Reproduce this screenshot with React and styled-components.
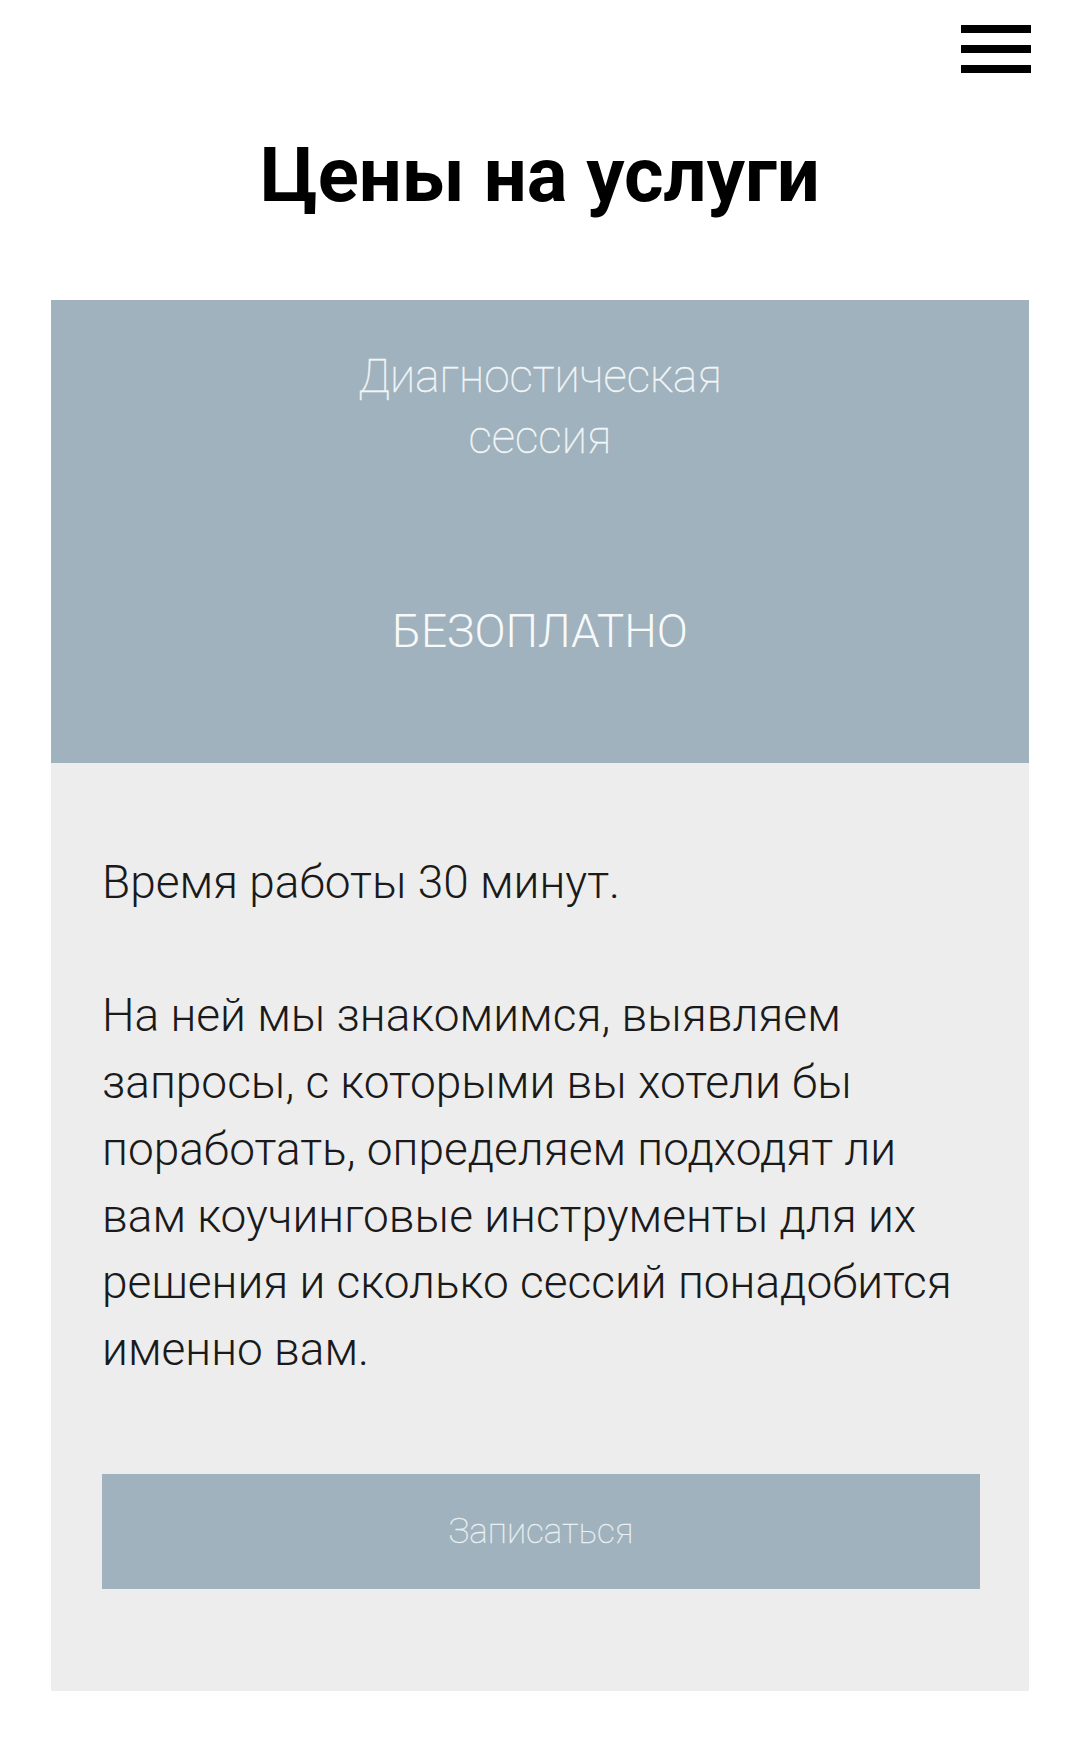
import React from "react";
import styled, { createGlobalStyle } from "styled-components";

const GlobalStyle = createGlobalStyle`
  html, body {
    margin: 0;
    padding: 0;
    background: #ffffff;
  }
  body {
    font-family: Roboto, "Noto Sans", "Liberation Sans", sans-serif;
    color: #000;
  }
  * { box-sizing: border-box; }
`;

const lightStack = `"Roboto Light", Roboto, "Noto Sans", sans-serif`;
const thinStack = `"Roboto Thin", "Roboto Light", Roboto, "Noto Sans", sans-serif`;

const Page = styled.div`
  width: 1080px;
  min-height: 1751px;
  padding: 0 51px;
  display: flex;
  flex-direction: column;
`;

const TopBar = styled.header`
  display: flex;
  justify-content: flex-end;
  padding-top: 25px;
`;

const MenuButton = styled.button`
  width: 70px;
  height: 48px;
  padding: 0;
  margin: 0 -2px 0 0;
  border: 0;
  background: transparent;
  display: flex;
  flex-direction: column;
  justify-content: space-between;
  cursor: pointer;
`;

const MenuBar = styled.span`
  display: block;
  width: 100%;
  height: 8px;
  background: #000;
`;

const Title = styled.h1`
  margin: 57px 0 0;
  text-align: center;
  font-family: Roboto, "Noto Sans", sans-serif;
  font-size: 76px;
  line-height: 91px;
  font-weight: 700;
`;

const Card = styled.section`
  margin-top: 79px;
  display: flex;
  flex-direction: column;
  background: #ededed;
`;

const CardHead = styled.div`
  background: #9fb2bd;
  padding: 46px 40px 103px;
  display: flex;
  flex-direction: column;
  align-items: center;
  text-align: center;
  color: #f3f6f8;
`;

const PlanName = styled.h2`
  margin: 0;
  font-family: ${thinStack};
  font-size: 46px;
  line-height: 61px;
  font-weight: 200;
  width: 400px;
  -webkit-text-stroke: 0.4px currentColor;
`;

const Price = styled.div`
  margin-top: 134px;
  font-family: ${lightStack};
  font-size: 46px;
  line-height: 58px;
  font-weight: 300;
  color: #f7f9fa;
`;

const CardBody = styled.div`
  padding: 86px 49px 102px 51px;
  display: flex;
  flex-direction: column;
`;

const Description = styled.p`
  margin: 0;
  font-family: ${lightStack};
  font-size: 46px;
  line-height: 66.7px;
  font-weight: 300;
  color: #1a1a1a;
`;

const SignupButton = styled.button`
  margin-top: 91px;
  height: 115px;
  width: 100%;
  border: 0;
  background: #9fb2bd;
  color: #eaf0f3;
  font-family: ${thinStack};
  font-size: 35px;
  font-weight: 200;
  -webkit-text-stroke: 0.3px currentColor;
  cursor: pointer;
`;

export default function App() {
  return (
    <>
      <GlobalStyle />
      <Page>
        <TopBar>
          <MenuButton aria-label="Меню">
            <MenuBar />
            <MenuBar />
            <MenuBar />
          </MenuButton>
        </TopBar>
        <Title>Цены на услуги</Title>
        <Card>
          <CardHead>
            <PlanName>Диагностическая сессия</PlanName>
            <Price>БЕЗОПЛАТНО</Price>
          </CardHead>
          <CardBody>
            <Description>
              Время работы 30 минут.
              <br />
              <br />
              На ней мы знакомимся, выявляем запросы, с которыми вы хотели бы
              поработать, определяем подходят ли вам коучинговые инструменты
              для их решения и сколько сессий понадобится именно вам.
            </Description>
            <SignupButton>Записаться</SignupButton>
          </CardBody>
        </Card>
      </Page>
    </>
  );
}
